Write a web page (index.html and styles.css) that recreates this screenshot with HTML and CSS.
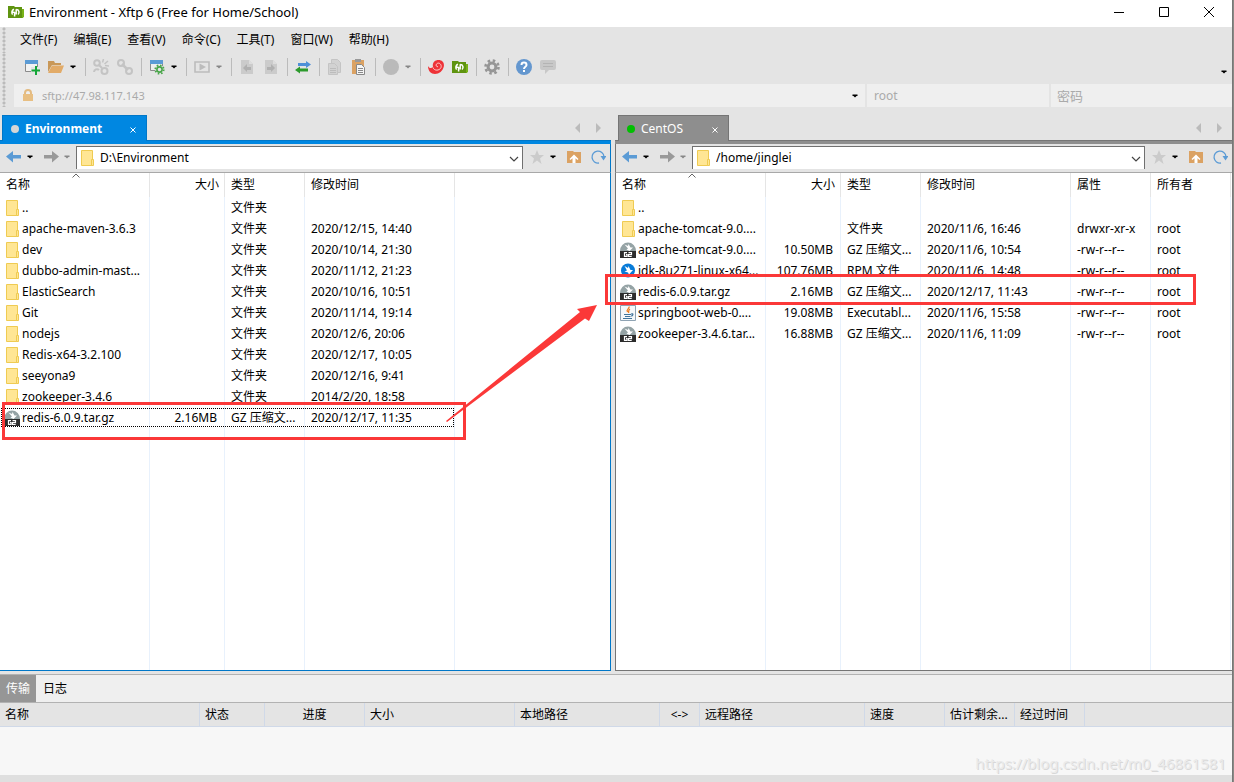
FILE: index.html
```html
<!DOCTYPE html>
<html lang="zh-CN">
<head>
<meta charset="utf-8">
<title>Environment - Xftp 6</title>
<link rel="stylesheet" href="styles.css">
</head>
<body>
<svg class="defs" aria-hidden="true">
  <symbol id="logo" viewBox="0 0 16 16"><path fill="#5f9410" d="M0 2h6l1 1h7v3h2l-1 8H0z"/><path fill="#78b318" d="M14 5h2v8l-2 1z"/><path fill="none" stroke="#fff" stroke-width="1.500" d="M6 5.200C3.800 6 3.200 8.600 4.600 10.600M6.600 12.500V8M8.200 10.500V5.200M8.200 5.600c3 0 3.600 3.400 1.800 4.900M4.600 8.200h2"/></symbol>
  <symbol id="caret" viewBox="0 0 16 16"><path fill="currentColor" d="M5.500 6.500h5V8H9.500L8 9.500 6.500 8h-1z"/></symbol>
  <symbol id="newwin" viewBox="0 0 16 16"><path fill="#fff" fill-opacity=".5" stroke="#8b8b8b" d="M1.500 2.500h12v10h-12z"/><path fill="#5b9bd5" d="M1 1h13v4H1z"/><path fill="#e4e4e4" d="M7 8h9v8H7z"/><path stroke="#12a637" stroke-width="2" d="M12 7v9M7.500 11.500h8.500"/></symbol>
  <symbol id="open" viewBox="0 0 16 16"><path fill="#c99858" d="M0 2h6l1 2h6v2H4L0 13z"/><path fill="#e2ab68" d="M4 6.500h12L13 14H0z"/></symbol>
  <symbol id="unlink" viewBox="0 0 16 16"><g fill="none" stroke="#c4c4c4" stroke-width="2"><circle cx="4" cy="4" r="2.800"/><circle cx="11.500" cy="12" r="3"/><path d="M1 13a3 3 0 0 1 5-2M6 6l3 3"/><path stroke-width="1.500" d="M10.500 0l-1 3.500M15 2l-3.500 3M16 7l-4-.5"/></g></symbol>
  <symbol id="link" viewBox="0 0 16 16"><g fill="none" stroke="#c4c4c4" stroke-width="2"><circle cx="4" cy="4" r="3"/><circle cx="12" cy="12" r="3"/><path stroke-width="2.500" d="M5 5l6 6"/></g></symbol>
  <symbol id="winset" viewBox="0 0 16 16"><path fill="#eee" stroke="#8b8b8b" d="M1.500 2.500h12v9h-12z"/><path fill="#5b9bd5" d="M1 1h13v4H1z"/><circle cx="10.500" cy="10.500" r="4.500" fill="#e4e4e4"/><circle cx="10.500" cy="10.500" r="2.600" fill="none" stroke="#4aa64a" stroke-width="1.600"/><circle cx="10.500" cy="10.500" r="4.200" fill="none" stroke="#4aa64a" stroke-width="1.800" stroke-dasharray="1.600 1.700"/></symbol>
  <symbol id="play" viewBox="0 0 16 16"><path fill="none" stroke="#bcbcbc" stroke-width="1.600" d="M1 3h14v10H1z"/><path fill="#bcbcbc" d="M5.500 4.500L12 8l-6.500 3.500z"/></symbol>
  <symbol id="pageleft" viewBox="0 0 16 16"><path fill="#cbcbcb" d="M2 1h8l4 4v10H2z"/><path fill="#b0b0b0" d="M4 9l4-4v3h4v3H8v2z"/><path fill="#ddd" d="M10 1v4h4z"/></symbol>
  <symbol id="pageright" viewBox="0 0 16 16"><path fill="#cbcbcb" d="M2 1h8l4 4v10H2z"/><path fill="#b0b0b0" d="M12 9L8 5v3H4v3h4v2z"/><path fill="#ddd" d="M10 1v4h4z"/></symbol>
  <symbol id="swap" viewBox="0 0 16 16"><path fill="#4f90d8" d="M3 4h8V2l5 3.500L11 9V7H3z"/><path fill="#2c9a2c" d="M13 9.500H5V7.500L0 11l5 3.500v-2h8z"/></symbol>
  <symbol id="copy" viewBox="0 0 16 16"><path fill="#d2d2d2" stroke="#c4c4c4" d="M4.500 .5h6l3 3v10h-9z"/><path fill="#d2d2d2" stroke="#c4c4c4" d="M1.500 4.500h6l3 3v8h-9z"/><path stroke="#bcbcbc" d="M3 9.500h6M3 11.500h6M3 13.500h6"/></symbol>
  <symbol id="paste" viewBox="0 0 16 16"><path fill="#dba263" d="M1 1h12v14H1z"/><path fill="#999" d="M4 0h6v3H4z"/><path fill="#f5f5f5" stroke="#888" d="M5.500 5.500h5l3 3v7h-8z"/><path stroke="#888" d="M7 9.500h5M7 11.500h5M7 13.500h5"/></symbol>
  <symbol id="globe" viewBox="0 0 16 16"><circle cx="8" cy="8" r="8" fill="#bababa"/></symbol>
  <symbol id="shell" viewBox="0 0 16 16"><path fill="#ee3338" d="M0 7c1 2 3 3 5 1-1-4 1.500-7 5.500-7 4 0 6 3 5.300 6.500C15 12 11 15 7 15 3 15 0 12 0 7z"/><path fill="none" stroke="#ffd0d0" stroke-width="1" d="M5 8.500c1 3.500 6.500 3.500 8 0 .8-3-1.500-5-3.500-4.200-2.200 1-1.500 3.700.5 3.400"/></symbol>
  <symbol id="gear" viewBox="0 0 16 16"><circle cx="8" cy="8" r="3.900" fill="none" stroke="#969696" stroke-width="3"/><circle cx="8" cy="8" r="6.500" fill="none" stroke="#969696" stroke-width="2.600" stroke-dasharray="2.500 2.600"/></symbol>
  <symbol id="help" viewBox="0 0 16 16"><circle cx="8" cy="8" r="8" fill="#6497cf"/><path fill="none" stroke="#fff" stroke-width="2" d="M5.500 6c0-3.200 5-3.200 5 0C10.500 7.800 8 7.700 8 10M8 11v2"/></symbol>
  <symbol id="chat" viewBox="0 0 16 16"><path fill="#c8c8c8" d="M2 1h12q2 0 2 2v6q0 2-2 2H9l-4 4v-4H2q-2 0-2-2V3q0-2 2-2z"/><path stroke="#b4b4b4" d="M3 4.500h10M3 7.500h10"/></symbol>
  <symbol id="lock" viewBox="0 0 16 16"><path fill="none" stroke="#e3bb82" stroke-width="2" d="M5 7V5c0-4 6-4 6 0v2"/><path fill="#e8bf83" d="M3 6h10v7H3z"/></symbol>
  <symbol id="back" viewBox="0 0 16 16"><path fill="#5b9bd5" d="M0 7.500L7 2v4h8v3.500H7v4z"/></symbol>
  <symbol id="fwd" viewBox="0 0 16 16"><path fill="#999" d="M16 7.500L9 2v4H1v3.500h8v4z"/></symbol>
  <symbol id="star" viewBox="0 0 16 16"><path fill="#cbcbcb" d="M8 1l2 5h5l-4 3.500L12.500 15 8 11.500 3.500 15 5 9.500 1 6h5z"/></symbol>
  <symbol id="up" viewBox="0 0 16 16"><path fill="#dba263" d="M1 2h6l1 1h7v11H1z"/><path fill="#fff" d="M8 5.500l4.500 4.500-1 1-2-1.800V14h-3V9.200l-2 1.800-1-1z"/></symbol>
  <symbol id="refresh" viewBox="0 0 16 16"><path fill="none" stroke="#5b9bd5" stroke-width="1.300" d="M14 7.500A6 6 0 1 0 9 14"/><path fill="#5b9bd5" d="M10.500 7h6l-3 4.500z"/></symbol>
  <symbol id="folder" viewBox="0 0 16 16"><path fill="#ffe694" stroke="#efcb52" d="M2.500 .5h11v15h-11z"/><path fill="#ffe694" stroke="#efcb52" d="M12.500 9.500h2v6h-2z"/></symbol>
  <symbol id="gz" viewBox="0 0 16 16"><path fill="#95a3a5" d="M0 9a8 8.500 0 0 1 16 0z"/><path fill="#fff" d="M4.500 2.500L8 4l.5-2 2 3.500H13L9.500 9l-3-1.500L8 6.500z"/><path fill="#2c2c2c" d="M0 9h16v7H0z"/><path fill="none" stroke="#fff" stroke-width="1.200" d="M7 10.600H4.500v3.800H7V12.500H6M8.500 10.600h3v2h-3v1.900h3.200"/></symbol>
  <symbol id="rpm" viewBox="0 0 16 16"><circle cx="8" cy="7.500" r="7" fill="#087bd8"/><path fill="#fff" d="M4.500 3L8 5l.5-2L10.500 7H13l-4 4.500L8 9.500 4.500 8.500 7 7.500z"/></symbol>
  <symbol id="jar" viewBox="0 0 16 16"><path fill="#f5f8fa" stroke="#8fa3b3" d="M.5 .5h15v15H.5z"/><path fill="none" stroke="#ee7d20" stroke-width="1.300" d="M9 1.500C10 4 5.500 4 7.500 7M10 4c-2 1-1 2-1.500 4"/><path fill="none" stroke="#41759c" stroke-width="1.200" d="M4 9.500h7M5 11.500h5.500M3 13.500h9M11 9c3-1 2 2 0 2"/></symbol>
  <symbol id="triL" viewBox="0 0 16 16"><path fill="#bbb" d="M5 8l5-5v10z"/></symbol>
  <symbol id="triR" viewBox="0 0 16 16"><path fill="#bbb" d="M11 8L6 3v10z"/></symbol>
  <symbol id="chev" viewBox="0 0 16 16"><path fill="none" stroke="#444" stroke-width="1.200" d="M4 7l4 4 4-4"/></symbol>
  <symbol id="x" viewBox="0 0 16 16"><path stroke="currentColor" d="M5.500 6.500l5 5M10.500 6.500l-5 5"/></symbol>
  <symbol id="sort" viewBox="0 0 8 5"><path fill="none" stroke="#666" d="M.5 4.500L4 1l3.500 3.500"/></symbol>
</svg>

<div class="app">
  <header class="titlebar">
    <svg class="icon"><use href="#logo"/></svg>
    <h1>Environment - Xftp 6 (Free for Home/School)</h1>
    <button class="winbtn" aria-label="最小化"><svg viewBox="0 0 12 12"><path d="M1 6.500h10"/></svg></button>
    <button class="winbtn" aria-label="最大化"><svg viewBox="0 0 12 12"><path d="M1.500 1.500h9v9h-9z"/></svg></button>
    <button class="winbtn" aria-label="关闭"><svg viewBox="0 0 12 12"><path d="M1 1l10 10M11 1L1 11"/></svg></button>
  </header>

  <nav class="menubar grip">
    <button>文件(F)</button><button>编辑(E)</button><button>查看(V)</button><button>命令(C)</button><button>工具(T)</button><button>窗口(W)</button><button>帮助(H)</button>
  </nav>

  <div class="tools grip">
    <div class="toolbar">
      <button class="tool" aria-label="新建"><svg class="icon"><use href="#newwin"/></svg></button>
      <button class="tool" aria-label="打开"><svg class="icon"><use href="#open"/></svg></button>
      <button class="drop" aria-label="打开选项"><svg class="icon"><use href="#caret"/></svg></button>
      <span class="sep"></span>
      <button class="tool" aria-label="断开"><svg class="icon"><use href="#unlink"/></svg></button>
      <button class="tool" aria-label="重新连接"><svg class="icon"><use href="#link"/></svg></button>
      <span class="sep"></span>
      <button class="tool" aria-label="属性"><svg class="icon"><use href="#winset"/></svg></button>
      <button class="drop" aria-label="属性选项"><svg class="icon"><use href="#caret"/></svg></button>
      <span class="sep"></span>
      <button class="tool" aria-label="运行"><svg class="icon"><use href="#play"/></svg></button>
      <button class="drop dim" aria-label="运行选项"><svg class="icon"><use href="#caret"/></svg></button>
      <span class="sep"></span>
      <button class="tool" aria-label="向左传输"><svg class="icon"><use href="#pageleft"/></svg></button>
      <button class="tool" aria-label="向右传输"><svg class="icon"><use href="#pageright"/></svg></button>
      <span class="sep"></span>
      <button class="tool" aria-label="同步"><svg class="icon"><use href="#swap"/></svg></button>
      <span class="sep"></span>
      <button class="tool" aria-label="复制"><svg class="icon"><use href="#copy"/></svg></button>
      <button class="tool" aria-label="粘贴"><svg class="icon"><use href="#paste"/></svg></button>
      <span class="sep"></span>
      <button class="tool" aria-label="编码"><svg class="icon"><use href="#globe"/></svg></button>
      <button class="drop dim" aria-label="编码选项"><svg class="icon"><use href="#caret"/></svg></button>
      <span class="sep"></span>
      <button class="tool" aria-label="Xshell"><svg class="icon"><use href="#shell"/></svg></button>
      <button class="tool" aria-label="Xftp"><svg class="icon"><use href="#logo"/></svg></button>
      <span class="sep"></span>
      <button class="tool" aria-label="选项"><svg class="icon"><use href="#gear"/></svg></button>
      <span class="sep"></span>
      <button class="tool" aria-label="帮助"><svg class="icon"><use href="#help"/></svg></button>
      <button class="tool" aria-label="反馈"><svg class="icon"><use href="#chat"/></svg></button>
      <button class="more" aria-label="更多"><svg class="icon"><use href="#caret"/></svg></button>
    </div>
    <div class="address">
      <div class="host">
        <svg class="icon"><use href="#lock"/></svg>
        <input aria-label="主机" value="sftp://47.98.117.143">
        <button aria-label="历史"><svg class="icon"><use href="#caret"/></svg></button>
      </div>
      <input class="cred" aria-label="用户名" value="root">
      <input class="cred secret" type="password" aria-label="密码" placeholder="密码">
    </div>
  </div>

  <main class="panes">
    <section class="pane local">
      <div class="tabs">
        <button class="tab"><span class="dot"></span><span>Environment</span><svg class="icon"><use href="#x"/></svg></button>
        <button class="arrow" aria-label="上一个标签"><svg class="icon"><use href="#triL"/></svg></button>
        <button class="arrow" aria-label="下一个标签"><svg class="icon"><use href="#triR"/></svg></button>
      </div>
      <div class="pathbar">
        <button class="nav" aria-label="后退"><svg class="icon"><use href="#back"/></svg></button>
        <button class="nav-drop" aria-label="后退历史"><svg class="icon"><use href="#caret"/></svg></button>
        <button class="nav" aria-label="前进"><svg class="icon"><use href="#fwd"/></svg></button>
        <button class="nav-drop dim" aria-label="前进历史"><svg class="icon"><use href="#caret"/></svg></button>
        <div class="path">
          <svg class="icon"><use href="#folder"/></svg>
          <input aria-label="本地文件夹" value="D:\Environment">
          <button aria-label="展开"><svg class="icon"><use href="#chev"/></svg></button>
        </div>
        <button class="nav" aria-label="收藏"><svg class="icon"><use href="#star"/></svg></button>
        <button class="nav-drop" aria-label="收藏选项"><svg class="icon"><use href="#caret"/></svg></button>
        <button class="nav" aria-label="上级目录"><svg class="icon"><use href="#up"/></svg></button>
        <button class="nav" aria-label="刷新"><svg class="icon"><use href="#refresh"/></svg></button>
      </div>
      <div class="list">
        <table class="files">
          <colgroup><col class="c-name"><col class="c-size"><col class="c-type"><col class="c-date"></colgroup>
          <thead><tr><th>名称<svg class="sort"><use href="#sort"/></svg></th><th class="num">大小</th><th>类型</th><th>修改时间</th></tr></thead>
          <tbody>
            <tr><td><svg class="icon"><use href="#folder"/></svg>..</td><td></td><td>文件夹</td><td></td></tr>
            <tr><td><svg class="icon"><use href="#folder"/></svg>apache-maven-3.6.3</td><td></td><td>文件夹</td><td>2020/12/15, 14:40</td></tr>
            <tr><td><svg class="icon"><use href="#folder"/></svg>dev</td><td></td><td>文件夹</td><td>2020/10/14, 21:30</td></tr>
            <tr><td><svg class="icon"><use href="#folder"/></svg>dubbo-admin-mast...</td><td></td><td>文件夹</td><td>2020/11/12, 21:23</td></tr>
            <tr><td><svg class="icon"><use href="#folder"/></svg>ElasticSearch</td><td></td><td>文件夹</td><td>2020/10/16, 10:51</td></tr>
            <tr><td><svg class="icon"><use href="#folder"/></svg>Git</td><td></td><td>文件夹</td><td>2020/11/14, 19:14</td></tr>
            <tr><td><svg class="icon"><use href="#folder"/></svg>nodejs</td><td></td><td>文件夹</td><td>2020/12/6, 20:06</td></tr>
            <tr><td><svg class="icon"><use href="#folder"/></svg>Redis-x64-3.2.100</td><td></td><td>文件夹</td><td>2020/12/17, 10:05</td></tr>
            <tr><td><svg class="icon"><use href="#folder"/></svg>seeyona9</td><td></td><td>文件夹</td><td>2020/12/16, 9:41</td></tr>
            <tr><td><svg class="icon"><use href="#folder"/></svg>zookeeper-3.4.6</td><td></td><td>文件夹</td><td>2014/2/20, 18:58</td></tr>
            <tr class="focused"><td><svg class="icon"><use href="#gz"/></svg>redis-6.0.9.tar.gz</td><td class="num">2.16MB</td><td>GZ 压缩文...</td><td>2020/12/17, 11:35</td></tr>
            <tr class="rest"><td></td><td></td><td></td><td></td></tr>
          </tbody>
        </table>
      </div>
    </section>

    <section class="pane remote">
      <div class="tabs">
        <button class="tab"><span class="dot"></span><span>CentOS</span><svg class="icon"><use href="#x"/></svg></button>
        <button class="arrow" aria-label="上一个标签"><svg class="icon"><use href="#triL"/></svg></button>
        <button class="arrow" aria-label="下一个标签"><svg class="icon"><use href="#triR"/></svg></button>
      </div>
      <div class="pathbar">
        <button class="nav" aria-label="后退"><svg class="icon"><use href="#back"/></svg></button>
        <button class="nav-drop" aria-label="后退历史"><svg class="icon"><use href="#caret"/></svg></button>
        <button class="nav" aria-label="前进"><svg class="icon"><use href="#fwd"/></svg></button>
        <button class="nav-drop dim" aria-label="前进历史"><svg class="icon"><use href="#caret"/></svg></button>
        <div class="path">
          <svg class="icon"><use href="#folder"/></svg>
          <input aria-label="远程文件夹" value="/home/jinglei">
          <button aria-label="展开"><svg class="icon"><use href="#chev"/></svg></button>
        </div>
        <button class="nav" aria-label="收藏"><svg class="icon"><use href="#star"/></svg></button>
        <button class="nav-drop" aria-label="收藏选项"><svg class="icon"><use href="#caret"/></svg></button>
        <button class="nav" aria-label="上级目录"><svg class="icon"><use href="#up"/></svg></button>
        <button class="nav" aria-label="刷新"><svg class="icon"><use href="#refresh"/></svg></button>
      </div>
      <div class="list">
        <table class="files">
          <colgroup><col class="c-name"><col class="c-size"><col class="c-type"><col class="c-date"><col class="c-attr"><col class="c-attr"></colgroup>
          <thead><tr><th>名称<svg class="sort"><use href="#sort"/></svg></th><th class="num">大小</th><th>类型</th><th>修改时间</th><th>属性</th><th>所有者</th></tr></thead>
          <tbody>
            <tr><td><svg class="icon"><use href="#folder"/></svg>..</td><td></td><td></td><td></td><td></td><td></td></tr>
            <tr><td><svg class="icon"><use href="#folder"/></svg>apache-tomcat-9.0....</td><td></td><td>文件夹</td><td>2020/11/6, 16:46</td><td>drwxr-xr-x</td><td>root</td></tr>
            <tr><td><svg class="icon"><use href="#gz"/></svg>apache-tomcat-9.0....</td><td class="num">10.50MB</td><td>GZ 压缩文...</td><td>2020/11/6, 10:54</td><td>-rw-r--r--</td><td>root</td></tr>
            <tr><td><svg class="icon"><use href="#rpm"/></svg>jdk-8u271-linux-x64...</td><td class="num">107.76MB</td><td>RPM 文件</td><td>2020/11/6, 14:48</td><td>-rw-r--r--</td><td>root</td></tr>
            <tr><td><svg class="icon"><use href="#gz"/></svg>redis-6.0.9.tar.gz</td><td class="num">2.16MB</td><td>GZ 压缩文...</td><td>2020/12/17, 11:43</td><td>-rw-r--r--</td><td>root</td></tr>
            <tr><td><svg class="icon"><use href="#jar"/></svg>springboot-web-0....</td><td class="num">19.08MB</td><td>Executabl...</td><td>2020/11/6, 15:58</td><td>-rw-r--r--</td><td>root</td></tr>
            <tr><td><svg class="icon"><use href="#gz"/></svg>zookeeper-3.4.6.tar...</td><td class="num">16.88MB</td><td>GZ 压缩文...</td><td>2020/11/6, 11:09</td><td>-rw-r--r--</td><td>root</td></tr>
            <tr class="rest"><td></td><td></td><td></td><td></td><td></td><td></td></tr>
          </tbody>
        </table>
      </div>
    </section>
  </main>

  <section class="transfers">
    <div class="subtabs"><button class="on">传输</button><button>日志</button></div>
    <table class="queue">
      <colgroup><col class="q200"><col class="q65"><col class="q100"><col class="q150"><col class="q145"><col class="q40"><col class="q165"><col class="q80"><col class="q70"><col class="q70"><col></colgroup>
      <thead><tr><th>名称</th><th>状态</th><th class="mid">进度</th><th>大小</th><th>本地路径</th><th class="mid">&lt;-&gt;</th><th>远程路径</th><th>速度</th><th>估计剩余...</th><th>经过时间</th><th></th></tr></thead>
    </table>
    <p class="watermark">https://blog.csdn.net/m0_46861581</p>
  </section>
  <footer class="status"></footer>
</div>

<div class="mark mark-local"></div>
<div class="mark mark-remote"></div>
<svg class="mark-arrow" viewBox="0 0 156 120"><path fill="#fb3838" d="M2 116L136 7l-3-3 20-4-8 16-4-2.500L3 117z"/></svg>
</body>
</html>
```
FILE: styles.css
```css
* { box-sizing: border-box; }
body {
  margin: 0;
  background: #8a8a86;
  color: #000;
  font: 12px/16px "Noto Sans", "Noto Sans CJK SC", sans-serif;
}
button, input { font: inherit; color: inherit; margin: 0; padding: 0; border: 0; background: none; }
input { min-width: 0; outline: 0; }
button { display: flex; align-items: center; justify-content: center; white-space: nowrap; }
.defs { position: absolute; width: 0; height: 0; }
.icon { width: 16px; height: 16px; flex: none; display: block; }
.dim { color: #888; }

.app {
  min-height: 100vh;
  margin-right: 1px;
  border-right: 1px solid #777;
  background: #e4e4e4;
  display: flex;
  flex-direction: column;
}

.titlebar { display: flex; align-items: center; height: 27px; padding: 0 1px 4px 8px; background: #fff; }
.titlebar h1 { flex: 1; margin: 0 0 0 5px; font-size: 13px; font-weight: 400; }
.winbtn { width: 45px; height: 23px; }
.winbtn svg { width: 12px; height: 12px; fill: none; stroke: #000; }

.grip {
  background-image: radial-gradient(circle at 2px 2px, #bbb 1px, transparent 2px);
  background-size: 4px 4px;
  background-repeat: repeat-y;
  background-position: 2px 0;
}
.menubar { display: flex; gap: 16px; height: 26px; padding: 0 20px; }
.menubar button { height: 26px; }

.tools { padding-left: 14px; }
.toolbar { display: flex; align-items: center; height: 31px; padding: 0 0 4px 6px; }
.tool { width: 24px; height: 24px; }
.drop { width: 13px; height: 24px; justify-content: flex-start; }
.drop .icon { margin-left: -3px; }
.sep { width: 8px; height: 18px; background: linear-gradient(#bbb, #bbb) center / 1px 100% no-repeat; }
.more { margin-left: auto; padding-top: 8px; height: 24px; align-self: flex-end; }
.address { display: flex; gap: 2px; height: 23px; color: #aaa; }
.host { display: flex; flex: 1; align-items: center; background: #efefef; padding: 0 2px 0 6px; }
.host input { flex: 1; margin-left: 6px; font-size: 11px; }
.host button { color: #000; }
.cred { width: 182px; padding: 0 7px; background: #efefef; }
.cred::placeholder { color: #aaa; }
.secret { width: 181px; font-size: 13px; padding: 0 6px; }

.panes { flex: 1; display: grid; grid-template-columns: 611fr 617fr; gap: 4px; padding-top: 8px; }
.pane { --main: #0087e1; --edge: #0077c8; min-width: 0; display: flex; flex-direction: column; }
.remote { --main: #8e8e8e; --edge: #757575; }
.tabs { display: flex; align-items: center; height: 29px; padding: 0 3px 4px 2px; background: linear-gradient(var(--edge), var(--edge)) 0 25px / 100% 1px no-repeat, linear-gradient(var(--main), var(--main)) 0 26px / 100% 3px no-repeat; }
.tab { height: 26px; width: 145px; padding: 0 5px 0 8px; margin: 0 auto 0 0; background: var(--main); border: 1px solid var(--edge); border-bottom: 0; color: #fff; font-weight: 700; align-self: flex-start; justify-content: flex-start; }
.tab .icon { margin-left: auto; }
.dot { width: 8px; height: 8px; margin-right: 6px; border-radius: 50%; background: #d6d6d6; }
.remote .tabs { padding-left: 3px; }
.remote .tab { width: 111px; font-weight: 400; }
.remote .dot { background: #00bf00; }
.arrow { width: 20px; height: 24px; }
.pathbar { display: flex; align-items: center; height: 28px; padding: 0 0 2px 2px; }
.nav { width: 24px; height: 24px; }
.nav-drop { width: 13px; height: 24px; justify-content: flex-start; }
.nav-drop .icon { margin-left: -4px; }
.path { flex: 1; min-width: 0; display: flex; align-items: center; height: 23px; margin-right: 2px; padding: 1px 0 0 2px; background: #fff; border: 1px solid #707070; border-bottom: 0; }
.path input { flex: 1; margin-left: 5px; }
.list { flex: 1; display: flex; background: #fff; border: solid var(--edge); border-width: 0 1px 1px 0; border-top: 1px solid #a8a8a8; overflow: hidden; }
.remote .list, .remote .pathbar { border-left: 1px solid var(--edge); }
.remote .list { border-right: 0; }
.local .pathbar { border-right: 1px solid var(--edge); }

table { border-collapse: separate; border-spacing: 0; table-layout: fixed; }
th, td { padding: 0 6px; text-align: left; font-weight: 400; white-space: nowrap; overflow: hidden; }
.files { width: 455px; }
.remote .files { width: 615px; }
.c-name, .c-date { width: 150px; }
.c-size { width: 75px; }
.c-type { width: 80px; }
.c-attr { width: 80px; }
.files th { height: 24px; border-right: 1px solid #e5e5e5; position: relative; }
.files td { height: 21px; border-right: 1px solid #e8f1fc; }
.files .rest td { height: auto; }
.files td:first-child { padding: 0 0 0 4px; }
.files td .icon { display: inline-block; vertical-align: top; margin-right: 2px; }
.files .num { text-align: right; padding-right: 7px; }
.files th.num { padding-right: 5px; }
.sort { position: absolute; left: 72px; top: 0; width: 8px; height: 5px; }
.focused { outline: 1px dotted #000; outline-offset: -2px; }

.transfers { margin-top: 3px; border-top: 1px solid #b2b2b2; background: #f7f7f7; height: 101px; position: relative; }
.subtabs { display: flex; height: 28px; background: #efefef; border-bottom: 1px solid #b2b2b2; }
.subtabs button { padding: 0 6px; }
.subtabs .on { background: #969696; color: #fff; }
.subtabs button + button { padding-left: 7px; }
.queue { width: 100%; background: #e4e4e4; }
.queue th { height: 24px; padding: 0 0 0 5px; border: solid #d0d9e8; border-width: 0 1px 1px 0; }
.queue .mid { text-align: center; padding: 0; }
.queue th:last-child { border-right: 0; }
.q200 { width: 200px; } .q65 { width: 65px; } .q100 { width: 100px; } .q150 { width: 150px; }
.q145 { width: 145px; } .q40 { width: 40px; } .q165 { width: 165px; } .q80 { width: 80px; } .q70 { width: 70px; }
.watermark { position: absolute; right: 6px; bottom: 0; margin: 0; font: 15px/24px "Noto Sans", sans-serif; color: #eaeaea; text-shadow: 1px 1px 0 #d8d8d8; }
.status { height: 7px; background: #dfdfdf; }

/* Highlights drawn over the window */
.mark { position: absolute; border: 3px solid #fb3838; }
.mark-local { left: 2px; top: 402px; width: 464px; height: 38px; }
.mark-remote { left: 605px; top: 274px; width: 591px; height: 31px; }
.mark-arrow { position: absolute; left: 444px; top: 305px; width: 156px; height: 120px; }
```
